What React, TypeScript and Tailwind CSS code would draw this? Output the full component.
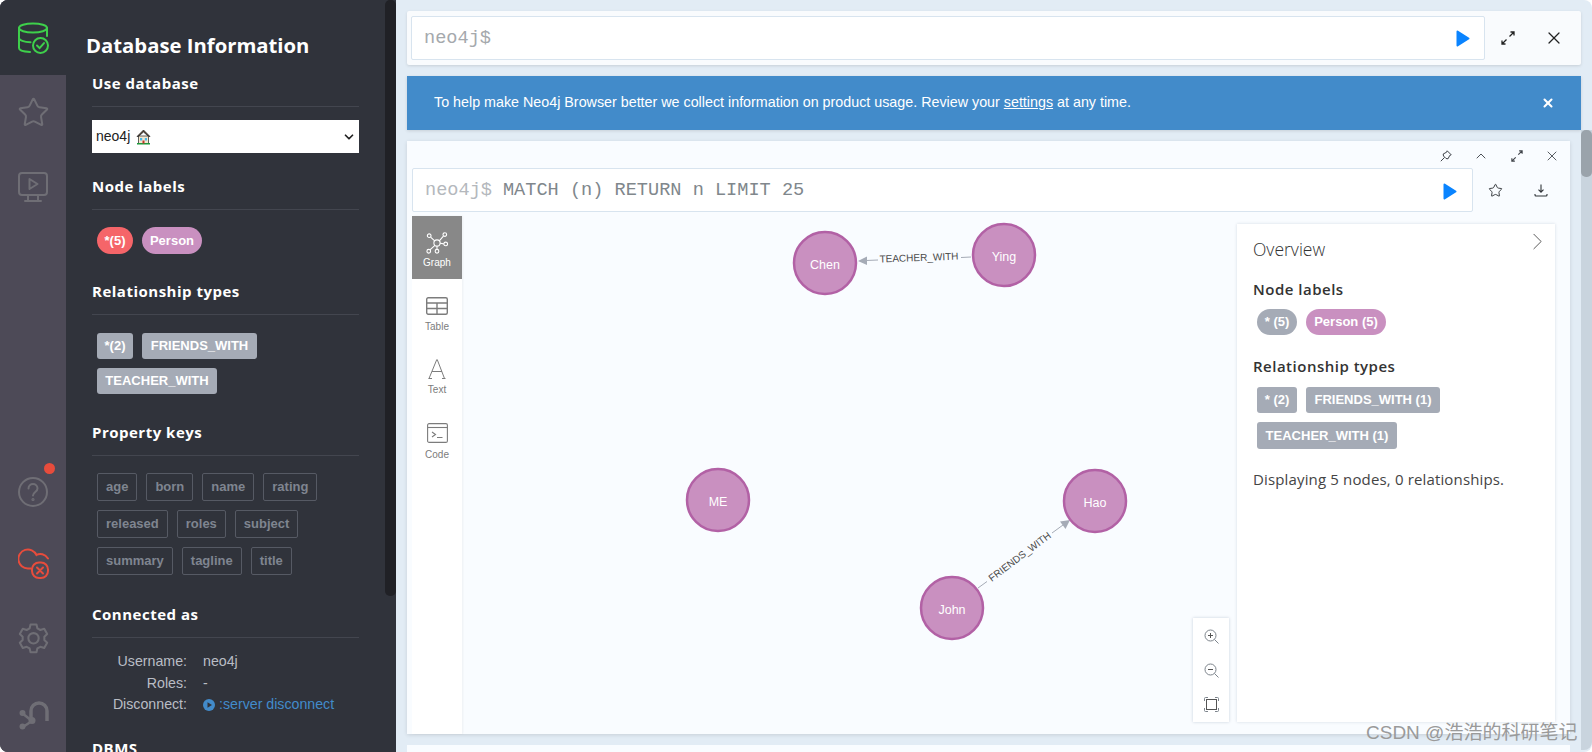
// Neo4j Browser: database drawer and result frame
import { ChevronDown, ChevronRight, ChevronUp, Star, X } from 'lucide-react';

const propertyRows = [
  ['age', 'born', 'name', 'rating'],
  ['released', 'roles', 'subject'],
  ['summary', 'tagline', 'title'],
];

const OPEN = { fontFamily: '"Open Sans", sans-serif' };

function DbIcon() {
  return (
    <svg width="32" height="33" viewBox="0 0 32 33" fill="none" stroke="#3ecf4b" strokeWidth="2" strokeLinecap="round">
      <ellipse cx="16" cy="6" rx="14" ry="4.5" />
      <path d="M2 6v20c0 2 4.5 3.6 11 4" />
      <path d="M2 16c0 2.2 5 4 11.5 4.2" />
      <path d="M30 6v8" />
      <circle cx="23.5" cy="23.5" r="7.5" />
      <path d="M20 23.5l2.6 2.6 4.4-5" />
    </svg>
  );
}

function MonitorIcon() {
  return (
    <svg width="30" height="30" viewBox="0 0 30 30" fill="none" stroke="#6f6e75" strokeWidth="2" strokeLinejoin="round" strokeLinecap="round">
      <rect x="1" y="1" width="28" height="22" rx="3" />
      <path d="M11.5 7l8 5-8 5z" />
      <path d="M10 23v5M20 23v5M7 29h16" />
    </svg>
  );
}

function QuestionIcon() {
  return (
    <svg width="30" height="30" viewBox="0 0 30 30" fill="none" stroke="#6f6e75" strokeWidth="2" strokeLinecap="round">
      <circle cx="15" cy="15" r="14" />
      <path d="M10.5 11.5c0-6 9-6 9 0 0 3.500-4.500 3.500-4.500 7" />
      <circle cx="15" cy="22.500" r="0.6" />
    </svg>
  );
}

function CloudOffIcon() {
  return (
    <svg width="31" height="31" viewBox="0 0 31 31" fill="none" stroke="#e74c3c" strokeWidth="2" strokeLinecap="round">
      <path d="M13 20.500H10a9.500 9.500 0 1 1 8.500-13.500c3.500-2 8.500-1 11.500 3.500" />
      <rect x="14" y="14.500" width="16" height="15.500" rx="7" fill="#4d4a57" />
      <path d="M19 19.500l6 6M25 19.500l-6 6" />
    </svg>
  );
}

function GearIcon() {
  return (
    <svg width="31" height="32" viewBox="0 0 24 24" fill="none" stroke="#6f6e75" strokeWidth="1.6" strokeLinejoin="round">
      <path d="M9.700 1.500h4.600l.7 3 2.300 1.300 3-.9 2.300 4-2.200 2.100v2.600l2.200 2.100-2.300 4-3-.9L15 20.100l-.7 2.900H9.700L9 20.100l-2.300-1.300-3 .9-2.300-4 2.200-2.100V11L1.400 8.900l2.300-4 3 .9L9 4.500z" />
      <circle cx="12" cy="12.200" r="4" />
    </svg>
  );
}

function ConnectIcon() {
  return (
    <svg width="31" height="31" viewBox="0 0 31 31" fill="none" stroke="#6f6e75" strokeWidth="3.500">
      <path d="M13 21V12a8 8 0 0 1 16 0v10" />
      <path d="M4 14l10 8-9 6" strokeWidth="2.500" />
      <circle cx="4.500" cy="14" r="3" fill="#6f6e75" stroke="none" />
      <circle cx="14" cy="21.500" r="3.500" fill="#6f6e75" stroke="none" />
      <circle cx="4.500" cy="27.500" r="3" fill="#6f6e75" stroke="none" />
    </svg>
  );
}

function HouseIcon() {
  return (
    <svg width="15" height="16" viewBox="0 0 15 16" className="ml-[6px]">
      <path d="M7.500 1L1 7.500h1.500L7.500 3l5 4.500H14z" fill="#5a4636" stroke="#222" strokeWidth="0.7" />
      <rect x="2.500" y="7" width="10" height="7.500" fill="#f4e7cf" stroke="#222" strokeWidth="0.7" />
      <rect x="4" y="9" width="2.200" height="2.500" fill="#49b8e8" />
      <rect x="8.800" y="9" width="2.200" height="2.500" fill="#49b8e8" />
      <rect x="1" y="14" width="13" height="1.500" fill="#1d9a3d" />
      <rect x="6.500" y="11.500" width="2" height="3" fill="#c0392b" />
    </svg>
  );
}

function PlayIcon() {
  return (
    <svg width="14" height="17" viewBox="0 0 14 17">
      <path d="M1.500 1.500L12.500 8.500L1.500 15.500Z" fill="#0a84ff" stroke="#0a84ff" strokeWidth="2" strokeLinejoin="round" />
    </svg>
  );
}

function ExpandIcon({ size, color }: { size: number; color: string }) {
  return (
    <svg width={size} height={size} viewBox="0 0 14 14" fill="none" stroke={color} strokeWidth="1.300">
      <path d="M8.500 5.500L13 1M9.500 1H13V4.500" />
      <path d="M5.500 8.500L1 13M1 9.500V13H4.500" />
    </svg>
  );
}

function PinIcon() {
  return (
    <svg width="12" height="12" viewBox="0 0 12 12" fill="none" stroke="#3f4349" strokeWidth="1">
      <path d="M7.200 .8L11.200 4.800 9.800 5.400 8 8.800 6 8.500 3.500 6 3.200 4 6.600 2.200z" strokeLinejoin="round" />
      <path d="M4.500 7.500L.8 11.200" />
    </svg>
  );
}

function DownloadIcon() {
  return (
    <svg width="14" height="13" viewBox="0 0 14 13" fill="none" stroke="#2f3337" strokeWidth="1.100">
      <path d="M7 .5V8M4.500 5.700L7 8.200l2.500-2.500" />
      <path d="M1 10v1c0 .6.400 1 1 1h10c.6 0 1-.4 1-1v-1" />
    </svg>
  );
}

function GraphTabIcon() {
  return (
    <svg width="22" height="22" viewBox="0 0 24 24" fill="none" stroke="#fff" strokeWidth="1.200">
      <circle cx="12" cy="12" r="3.400" />
      <circle cx="3.500" cy="4" r="2" />
      <circle cx="20.500" cy="2.800" r="2" />
      <circle cx="21.500" cy="13" r="2" />
      <circle cx="12" cy="21" r="2" />
      <circle cx="3" cy="21" r="2" />
      <path d="M5 5.500L9.500 9.700M19 4.500L14.500 9.700M19.500 13L15.400 12.300M12 15.400V19M4.300 19.500L9.700 14.500" />
    </svg>
  );
}

function TableTabIcon() {
  return (
    <svg width="22" height="18" viewBox="0 0 22 18" fill="none" stroke="#7c7c7c" strokeWidth="1.400">
      <rect x=".7" y=".7" width="20.600" height="16.600" rx="1.500" />
      <path d="M.7 6H21.300M.7 11.500H21.300M11 6V17.300" />
    </svg>
  );
}

function TextTabIcon() {
  return (
    <svg width="18" height="20" viewBox="0 0 18 20" fill="none" stroke="#7c7c7c">
      <path d="M1 19.500L8.800 .5M9.200 .5L16.500 19.500" strokeWidth="1" />
      <path d="M4 12.500H14" strokeWidth="1" />
      <path d="M.5 19.500H4M14 19.500H17.500" strokeWidth="1" />
    </svg>
  );
}

function CodeTabIcon() {
  return (
    <svg width="21" height="20" viewBox="0 0 21 20" fill="none" stroke="#7c7c7c" strokeWidth="1.100">
      <rect x=".6" y=".6" width="19.800" height="18.800" rx="1.500" />
      <path d="M.6 4.500H20.400" />
      <path d="M5 9l3.500 2.500L5 14M10 14.500h5.500" />
    </svg>
  );
}

function ZoomIcon({ kind }: { kind: 'in' | 'out' }) {
  return (
    <svg width="15" height="15" viewBox="0 0 15 15" fill="none" stroke="#7d848c" strokeWidth="1">
      <circle cx="6.500" cy="6.500" r="5.500" />
      <path d="M10.500 10.500L14.500 14.500" />
      <path d="M4 6.500H9" stroke="#555" />
      {kind === 'in' && <path d="M6.500 4V9" stroke="#555" />}
    </svg>
  );
}

function FitIcon() {
  return (
    <svg width="15" height="15" viewBox="0 0 15 15" fill="none" stroke="#7d848c" strokeWidth="1">
      <rect x="2.500" y="2.500" width="10" height="10" stroke="#555" />
      <path d="M.5 4V1.500a1 1 0 0 1 1-1H4M11 .5h2.500a1 1 0 0 1 1 1V4M14.500 11v2.500a1 1 0 0 1-1 1H11M4 14.500H1.500a1 1 0 0 1-1-1V11" />
    </svg>
  );
}

function GraphNode({ cx, cy, label }: { cx: number; cy: number; label: string }) {
  return (
    <g>
      <circle cx={cx} cy={cy} r="31" fill="#c990c0" stroke="#b261a5" strokeWidth="2.500" />
      <text x={cx} y={cy + 6} textAnchor="middle" fill="#fff" fontSize="12.500" fontFamily='"Liberation Sans", sans-serif'>{label}</text>
    </g>
  );
}

function GraphCanvas() {
  return (
    <svg className="absolute inset-0 h-full w-full" viewBox="462 216 1108 518">
      <path d="M971 257L961 257.500M878 260L866 260.500" stroke="#a5abb6" strokeWidth="1" />
      <path d="M858 261L867 256.500V265Z" fill="#a5abb6" />
      <text x="919" y="261" transform="rotate(-2 919 258)" textAnchor="middle" fontSize="10" fill="#4a4a4a" fontFamily='"Liberation Sans", sans-serif'>TEACHER_WITH</text>
      <path d="M978 588L987 581.500M1052 533L1063 525" stroke="#a5abb6" strokeWidth="1" />
      <path d="M1070 520L1065.500 529L1060 521.500Z" fill="#a5abb6" />
      <text x="1020" y="560" transform="rotate(-37 1020 557)" textAnchor="middle" fontSize="10" fill="#4a4a4a" fontFamily='"Liberation Sans", sans-serif'>FRIENDS_WITH</text>
      <GraphNode cx={825} cy={263} label="Chen" />
      <GraphNode cx={1004} cy={255} label="Ying" />
      <GraphNode cx={718} cy={500} label="ME" />
      <GraphNode cx={1095} cy={501} label="Hao" />
      <GraphNode cx={952} cy={608} label="John" />
    </svg>
  );
}

function Heading({ children }: { children: string }) {
  return (
    <h4 className="border-b border-[#43464f] pb-[13px] text-[15px] leading-[20px] font-bold tracking-[0.5px] text-white" style={OPEN}>
      {children}
    </h4>
  );
}

function Sidebar() {
  return (
    <div className="flex h-full shrink-0 overflow-hidden rounded-l-[8px] bg-[#30333b]">
      {/* Icon rail */}
      <div className="flex h-full w-[66px] flex-col items-center bg-[#4d4a57]">
        <div className="flex h-[75px] w-full items-start justify-center bg-[#30333b] pt-[22px]">
          <DbIcon />
        </div>
        <Star className="mt-[21px] h-[33px] w-[33px] text-[#6f6e75]" strokeWidth={1.5} />
        <div className="mt-[43px]">
          <MonitorIcon />
        </div>
        <div className="relative mt-[275px]">
          <QuestionIcon />
          <span className="absolute top-[-14px] left-[26px] h-[11px] w-[11px] rounded-full bg-[#e74c3c]" />
        </div>
        <div className="mt-[41px]">
          <CloudOffIcon />
        </div>
        <div className="mt-[43px]">
          <GearIcon />
        </div>
        <div className="mt-[45px]">
          <ConnectIcon />
        </div>
      </div>

      {/* Drawer */}
      <div className="w-[319px] pt-[30px] pl-[26px] pr-[26px]">
        <h3 className="-ml-[6px] text-[20.300px] leading-[30px] font-bold whitespace-nowrap text-white" style={OPEN}>Database Information</h3>

        <div className="mt-[13px]">
          <Heading>Use database</Heading>
          <div className="mt-[13px] flex h-[33px] items-center bg-white pl-[4px] text-[14px] text-[#222]" style={{ fontFamily: '"Liberation Sans", sans-serif' }}>
            neo4j
            <HouseIcon />
            <ChevronDown className="mr-[3px] ml-auto h-[14px] w-[14px] text-[#222]" strokeWidth={3} />
          </div>
        </div>

        <div className="mt-[23px]">
          <Heading>Node labels</Heading>
          <div className="flex gap-[9px] pt-[17px] pl-[5px] font-['Liberation_Sans'] text-[13px] font-bold text-white">
            <span className="flex h-[27px] w-[36px] items-center justify-center rounded-full bg-[#f56569]">*(5)</span>
            <span className="flex h-[27px] w-[60px] items-center justify-center rounded-full bg-[#c990c0]">Person</span>
          </div>
        </div>

        <div className="mt-[27px]">
          <Heading>Relationship types</Heading>
          <div className="flex flex-wrap gap-[9px] pt-[18px] pl-[5px] font-['Liberation_Sans'] text-[13px] font-bold text-white">
            <span className="flex h-[26px] w-[36px] items-center justify-center rounded-[3px] bg-[#a5abb6]">*(2)</span>
            <span className="flex h-[26px] w-[115px] items-center justify-center rounded-[3px] bg-[#a5abb6]">FRIENDS_WITH</span>
            <span className="flex h-[26px] w-[120px] items-center justify-center rounded-[3px] bg-[#a5abb6]">TEACHER_WITH</span>
          </div>
        </div>

        <div className="mt-[28px]">
          <Heading>Property keys</Heading>
          <div className="flex flex-col gap-[9px] pt-[17px] pl-[5px] font-['Liberation_Sans'] text-[13px] font-bold text-[#7f8590]">
            {propertyRows.map((row) => (
              <div key={row[0]} className="flex gap-[9px]">
                {row.map((key) => (
                  <span key={key} className="flex h-[28px] items-center rounded-[2px] border border-[#565a64] px-[8px]">{key}</span>
                ))}
              </div>
            ))}
          </div>
        </div>

        <div className="mt-[29px]">
          <Heading>Connected as</Heading>
          <div className="grid grid-cols-[95px_1fr] gap-x-[16px] pt-[13px] font-['Liberation_Sans'] text-[14.200px] leading-[21.500px] text-[#b9bdc5]">
            <span className="text-right">Username:</span>
            <span>neo4j</span>
            <span className="text-right">Roles:</span>
            <span>-</span>
            <span className="text-right">Disconnect:</span>
            <span className="flex items-center text-[#428bca]">
              <svg width="12" height="12" viewBox="0 0 12 12" className="mr-[4px]">
                <circle cx="6" cy="6" r="6" fill="#428bca" />
                <path d="M4.500 3.200L9 6L4.500 8.800Z" fill="#30333b" />
              </svg>
              :server disconnect
            </span>
          </div>
        </div>

        <div className="mt-[22px]">
          <Heading>DBMS</Heading>
        </div>
      </div>

      {/* Drawer scrollbar */}
      <div className="h-full w-[11px]">
        <div className="h-[596px] rounded-[5px] bg-[#202126]" />
      </div>
    </div>
  );
}

function ResultFrame() {
  return (
    <div className="flex h-[593px] shrink-0 flex-col bg-[#f9fcff] shadow-[0_1px_4px_rgba(0,0,0,0.12)]">
      {/* Frame controls */}
      <div className="flex h-[27px] shrink-0 items-center justify-end pt-[2px] text-[#3f4349]">
        <span className="flex w-[35px] justify-center"><PinIcon /></span>
        <span className="flex w-[36px] justify-center"><ChevronUp className="h-[16px] w-[16px]" strokeWidth={1.4} /></span>
        <span className="flex w-[35px] justify-center"><ExpandIcon size={12} color="#3f4349" /></span>
        <span className="flex w-[36px] justify-center"><X className="h-[16px] w-[16px]" strokeWidth={1.3} /></span>
      </div>

      {/* Query bar */}
      <div className="flex h-[44px] shrink-0 items-center pl-[5px]">
        <div className="flex h-full flex-1 items-center rounded-[2px] border border-[#d8e4ef] bg-white pt-[2px] pr-[15px] pl-[12px] font-['Liberation_Mono'] text-[18.600px]">
          <span className="text-[#b4b8bd]">neo4j$</span>
          <span className="ml-[11px] text-[#80878c]">MATCH (n) RETURN n LIMIT 25</span>
          <span className="ml-auto flex"><PlayIcon /></span>
        </div>
        <span className="flex w-[45px] justify-center"><Star className="h-[15px] w-[15px] text-[#2f3337]" strokeWidth={1.5} /></span>
        <span className="mr-[6px] flex w-[46px] justify-center"><DownloadIcon /></span>
      </div>

      {/* Result body */}
      <div className="mt-[4px] flex min-h-0 flex-1 pl-[5px]">
        <div className="w-[50px] shrink-0 bg-white font-['Liberation_Sans'] text-[10px] text-[#7c7c7c] shadow-[1px_0_2px_rgba(0,0,0,0.05)]">
          <div className="flex h-[63px] flex-col items-center bg-[#888888] pt-[16px] text-white">
            <GraphTabIcon />
            <span className="mt-[3px] leading-[12px]">Graph</span>
          </div>
          <div className="flex h-[62px] flex-col items-center pt-[18px]">
            <TableTabIcon />
            <span className="mt-[6px] leading-[12px]">Table</span>
          </div>
          <div className="flex h-[64px] flex-col items-center pt-[18px]">
            <TextTabIcon />
            <span className="mt-[5px] leading-[12px]">Text</span>
          </div>
          <div className="flex h-[64px] flex-col items-center pt-[18px]">
            <CodeTabIcon />
            <span className="mt-[6px] leading-[12px]">Code</span>
          </div>
        </div>

        <div className="relative min-w-0 flex-1">
          <GraphCanvas />

          <div className="absolute right-[341px] bottom-[12px] flex h-[104px] w-[36px] flex-col items-center gap-[19px] bg-white pt-[11px] shadow-[0_0_3px_rgba(0,40,80,0.2)]">
            <ZoomIcon kind="in" />
            <ZoomIcon kind="out" />
            <FitIcon />
          </div>

          <div className="absolute top-[8px] right-[15px] bottom-[12px] w-[318px] bg-white px-[16px] shadow-[0_0_3px_rgba(0,40,80,0.15)]" style={OPEN}>
            <ChevronRight className="absolute top-[3px] right-[3px] h-[29px] w-[29px] text-[#555]" strokeWidth={0.8} />
            <div className="pt-[13px] text-[17.500px] leading-[24px] font-light text-[#333]">Overview</div>
            <div className="mt-[18px] text-[15px] leading-[20px] font-semibold tracking-[0.5px] text-[#333]">Node labels</div>
            <div className="mt-[10px] flex gap-[9px] pl-[4px] font-['Liberation_Sans'] text-[13px] font-bold text-white">
              <span className="flex h-[26px] w-[40px] items-center justify-center rounded-full bg-[#a5abb6]">* (5)</span>
              <span className="flex h-[26px] w-[80px] items-center justify-center rounded-full bg-[#c990c0]">Person (5)</span>
            </div>
            <div className="mt-[21px] text-[15px] leading-[20px] font-semibold tracking-[0.5px] text-[#333]">Relationship types</div>
            <div className="mt-[11px] flex flex-wrap gap-[9px] pl-[4px] font-['Liberation_Sans'] text-[13px] font-bold text-white">
              <span className="flex h-[26px] w-[40px] items-center justify-center rounded-[3px] bg-[#a5abb6]">* (2)</span>
              <span className="flex h-[26px] w-[134px] items-center justify-center rounded-[3px] bg-[#a5abb6]">FRIENDS_WITH (1)</span>
              <span className="flex h-[27px] w-[140px] items-center justify-center rounded-[3px] bg-[#a5abb6]">TEACHER_WITH (1)</span>
            </div>
            <div className="mt-[20px] text-[15px] leading-[20px] tracking-[0.15px] text-[#444]">Displaying 5 nodes, 0 relationships.</div>
          </div>
        </div>
      </div>
    </div>
  );
}

export default function App() {
  return (
    <div className="relative flex h-[752px] w-[1592px] overflow-hidden bg-white">
      <Sidebar />

      <div className="flex min-w-0 flex-1 flex-col overflow-hidden rounded-r-[8px] bg-[#e2ecf5]">
        <div className="px-[11px] pt-[11px]">
          {/* Editor frame */}
          <div className="flex h-[54px] items-center rounded-[2px] bg-[#f9fbfd] pl-[4px] shadow-[0_1px_3px_rgba(0,0,0,0.12)]">
            <div className="flex h-[44px] flex-1 items-center rounded-[2px] border border-[#d8e4ef] bg-white pr-[14px] pl-[12px] font-['Liberation_Mono'] text-[18.600px] text-[#a5a9ad]">
              <span className="mt-[2px]">neo4j$</span>
              <span className="ml-auto flex"><PlayIcon /></span>
            </div>
            <span className="flex w-[46px] justify-center"><ExpandIcon size={14} color="#222" /></span>
            <span className="mr-[5px] flex w-[45px] justify-center"><X className="h-[20px] w-[20px] text-[#222]" strokeWidth={1.5} /></span>
          </div>

          {/* Usage banner */}
          <div className="mt-[11px] flex h-[54px] items-center bg-[#428bca] pr-[26px] pl-[27px] font-['Liberation_Sans'] text-[14.300px] text-white shadow-[0_1px_3px_rgba(0,0,0,0.12)]">
            <span>To help make Neo4j Browser better we collect information on product usage. Review your <u>settings</u> at any time.</span>
            <X className="ml-auto h-[14px] w-[14px]" strokeWidth={3.5} />
          </div>
        </div>

        <div className="flex min-h-0 flex-1">
          <div className="min-w-0 flex-1 pt-[11px] pr-[11px] pl-[11px]">
            <ResultFrame />
            <div className="mt-[11px] h-[20px] bg-[#f9fcff]" />
          </div>
          {/* Stream scrollbar */}
          <div className="h-[620px] w-[11px] shrink-0 rounded-br-[8px] bg-[#c9d4de]">
            <div className="h-[47px] rounded-[5px] bg-[#9aa3ab]" />
          </div>
        </div>
      </div>

      {/* Watermark */}
      <span className="absolute top-[721px] left-[1366px] font-['Liberation_Sans','Noto_Sans_CJK_SC',sans-serif] text-[19px] leading-[24px] whitespace-nowrap text-[#9a9a9a]">CSDN @浩浩的科研笔记</span>
    </div>
  );
}
